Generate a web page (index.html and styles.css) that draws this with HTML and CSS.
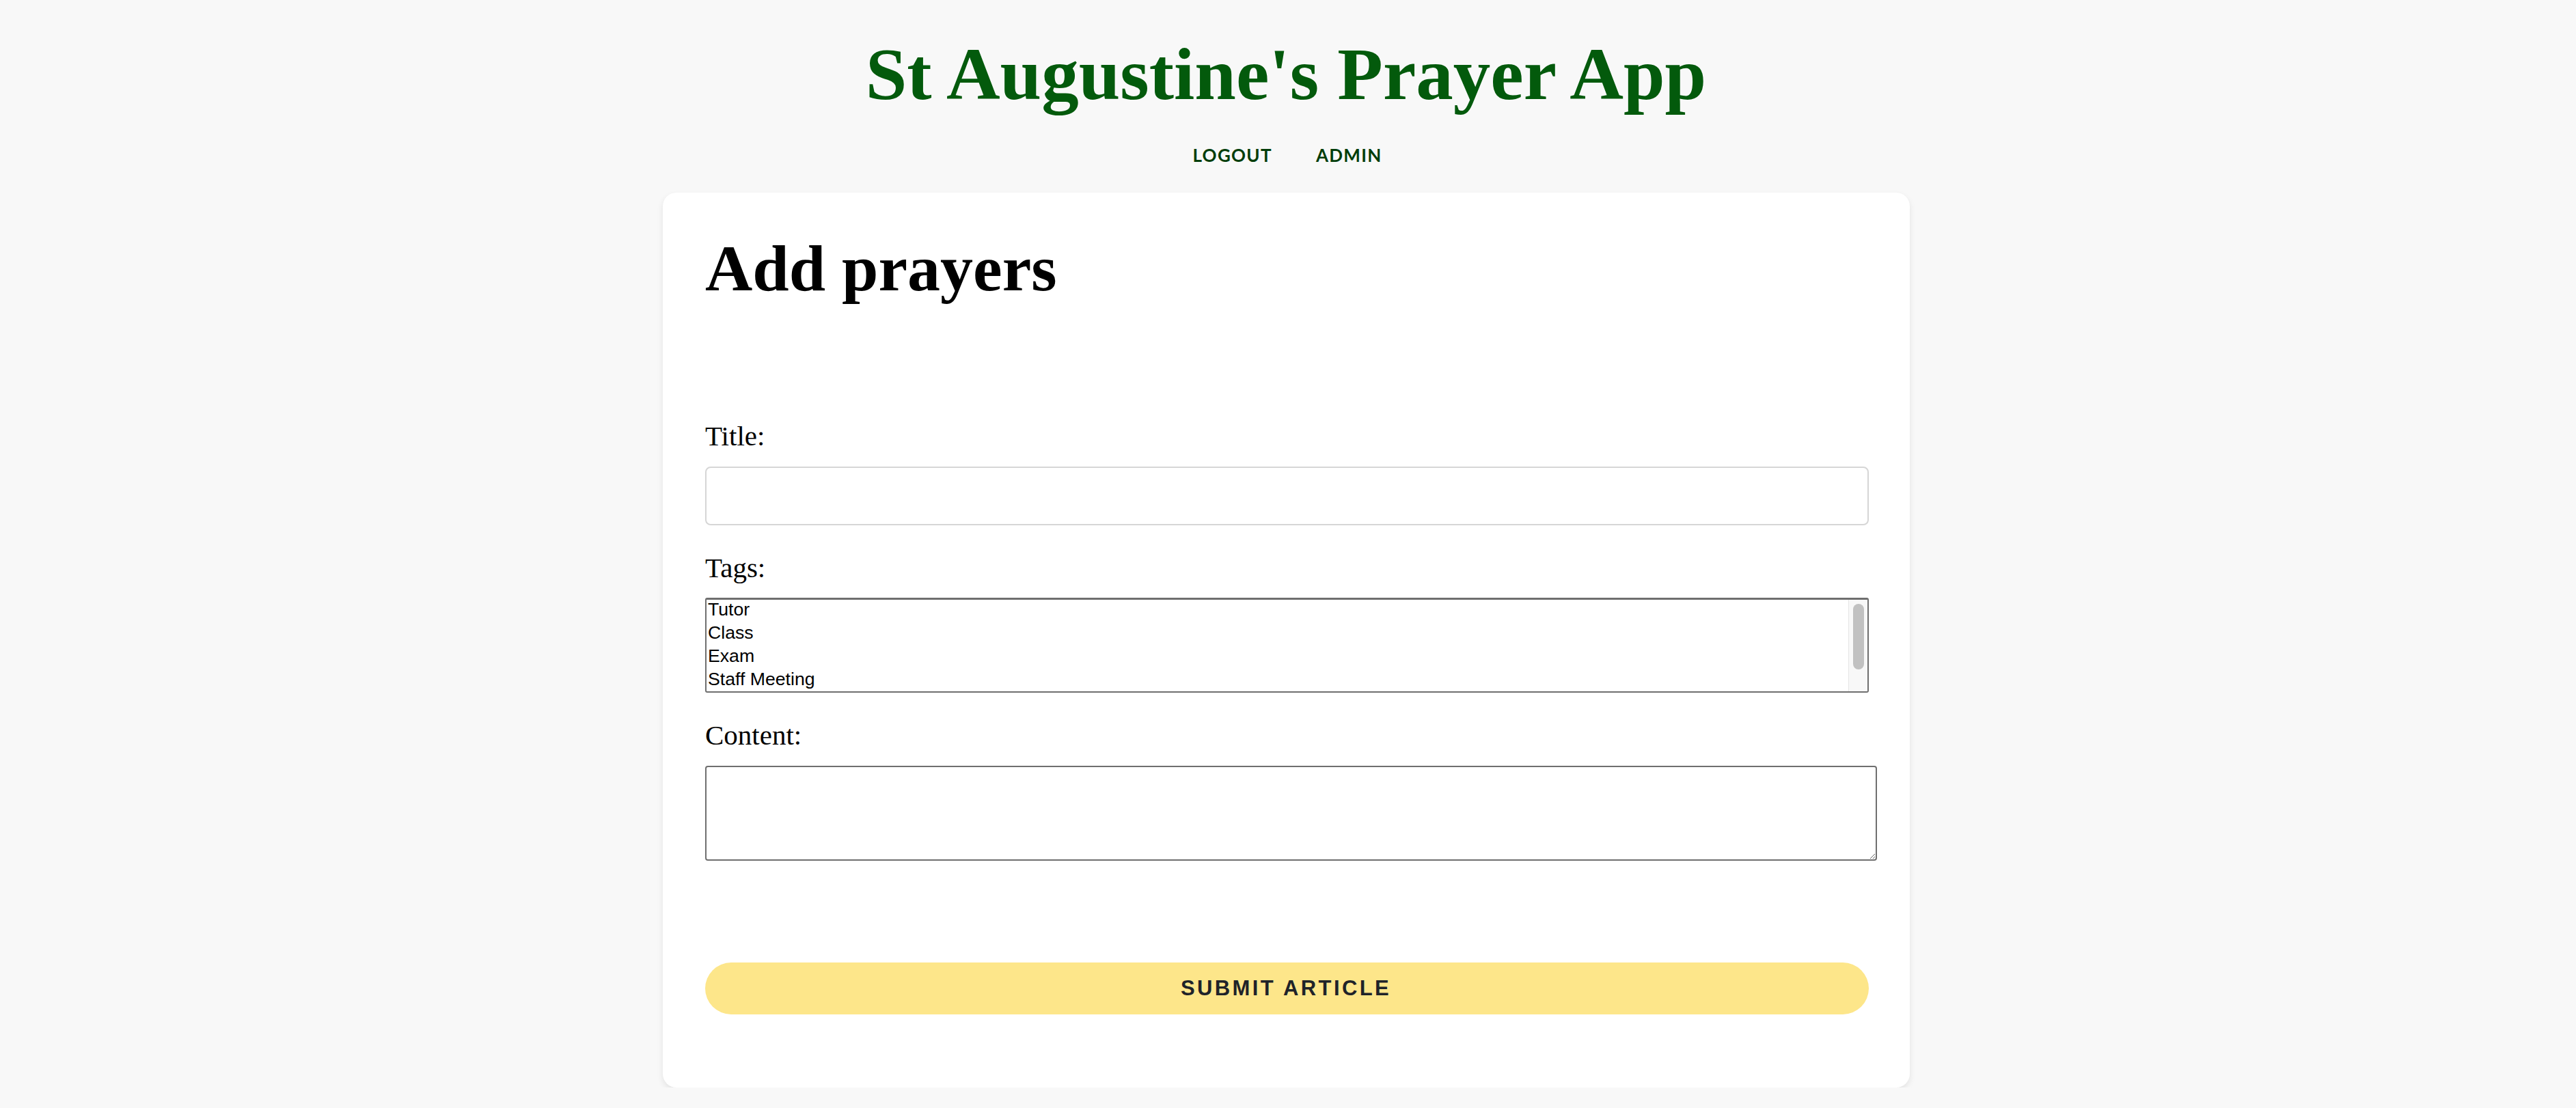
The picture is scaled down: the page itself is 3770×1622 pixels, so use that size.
FILE: index.html
```html
<!DOCTYPE html>
<html lang="en">
<head>
<meta charset="utf-8">
<title>St Augustine's Prayer App</title>
<link rel="stylesheet" href="styles.css">
</head>
<body>
<header class="site-header">
  <h1 class="site-title">St Augustine's Prayer App</h1>
  <nav class="site-nav">
    <a class="nav-link" href="#">LOGOUT</a>
    <a class="nav-link" href="#">ADMIN</a>
  </nav>
</header>
<main class="card">
  <h2 class="page-title">Add prayers</h2>
  <form class="prayer-form">
    <label class="field-label" for="title">Title:</label>
    <input class="text-input field" id="title" type="text">
    <label class="field-label" for="tags">Tags:</label>
    <div class="select-wrap field">
      <select class="tag-select" id="tags" multiple size="4">
        <option>Tutor</option>
        <option>Class</option>
        <option>Exam</option>
        <option>Staff Meeting</option>
        <option>Assembly</option>
      </select>
      <div class="scroll-track" aria-hidden="true"><div class="scroll-thumb"></div></div>
    </div>
    <label class="field-label" for="content">Content:</label>
    <textarea class="content-area field" id="content"></textarea>
    <button class="submit-btn" type="button">SUBMIT ARTICLE</button>
  </form>
</main>
</body>
</html>
```
FILE: styles.css
```css
html, body {
  margin: 0;
  padding: 0;
}
body {
  background: #f8f8f8;
  font-family: "Liberation Serif", "Times New Roman", serif;
  color: #000;
}
.site-header {
  padding-top: 49px;
  padding-right: 6px;
  display: flex;
  flex-direction: column;
  align-items: center;
}
.site-title {
  margin: 0;
  font-size: 109px;
  line-height: 120px;
  font-weight: bold;
  color: #035a0c;
}
.site-nav {
  margin-top: 40px;
  margin-left: 4px;
  display: flex;
  gap: 64px;
  height: 36px;
}
.nav-link {
  font-family: Lato, "Open Sans", sans-serif;
  font-weight: 700;
  font-size: 26px;
  line-height: 36px;
  letter-spacing: 1.3px;
  color: #023d0a;
  text-decoration: none;
}
.card {
  display: block;
  width: 1825px;
  box-sizing: border-box;
  margin: 37px 0 0 calc(50% - 915px);
  background: #fff;
  border-radius: 20px;
  box-shadow: 0 4px 10px rgba(0, 0, 0, 0.09);
  padding: 56px 60px 107px 62px;
}
.page-title {
  margin: 0;
  font-size: 96px;
  line-height: 110px;
  font-weight: bold;
}
.prayer-form {
  display: flex;
  flex-direction: column;
  align-items: flex-start;
  margin-top: 166px;
}
.field-label {
  display: block;
  font-size: 41px;
  line-height: 48px;
  margin-bottom: 21px;
}
.field {
  margin-bottom: 38px;
}
.text-input {
  width: 100%;
  height: 86px;
  box-sizing: border-box;
  border: 2px solid #d6d6d6;
  border-radius: 8px;
  background: #fff;
  outline: none;
}
.select-wrap {
  position: relative;
  width: 100%;
  height: 139px;
  margin-top: -1px;
}
.tag-select {
  display: block;
  width: 100%;
  height: 139px;
  box-sizing: border-box;
  border: 2px solid #6f6f6f;
  border-top-width: 3px;
  border-radius: 3px;
  background: #fff;
  font-family: "Liberation Sans", Arial, sans-serif;
  font-size: 26.67px;
  color: #000;
  padding: 0;
  margin: 0;
  outline: none;
  overflow: hidden;
}
.tag-select option {
  line-height: 30px;
  padding: 0 2px 2px;
  margin-top: -1px;
  margin-bottom: 1px;
}
.scroll-track {
  position: absolute;
  top: 3px;
  right: 2px;
  bottom: 2px;
  width: 28px;
  background: #f8f8f8;
  border-left: 1px solid #e6e6e6;
  box-sizing: border-box;
}
.scroll-thumb {
  margin: 6px 0 0 6px;
  width: 16px;
  height: 96px;
  border-radius: 8px;
  background: #c1c1c1;
}
.content-area {
  display: block;
  width: 100%;
  height: 127px;
  padding: 4px;
  border: 2px solid #6f6f6f;
  border-radius: 4px;
  background: #fff;
  font-family: "Liberation Mono", monospace;
  font-size: 26px;
  outline: none;
  margin-bottom: 149px;
}
.submit-btn {
  width: 100%;
  height: 76px;
  border: none;
  border-radius: 38px;
  background: #fde68a;
  color: #1f2329;
  font-family: "Liberation Sans", Arial, sans-serif;
  font-weight: bold;
  font-size: 31px;
  letter-spacing: 3.4px;
  padding-left: 3px;
  cursor: pointer;
}
```
